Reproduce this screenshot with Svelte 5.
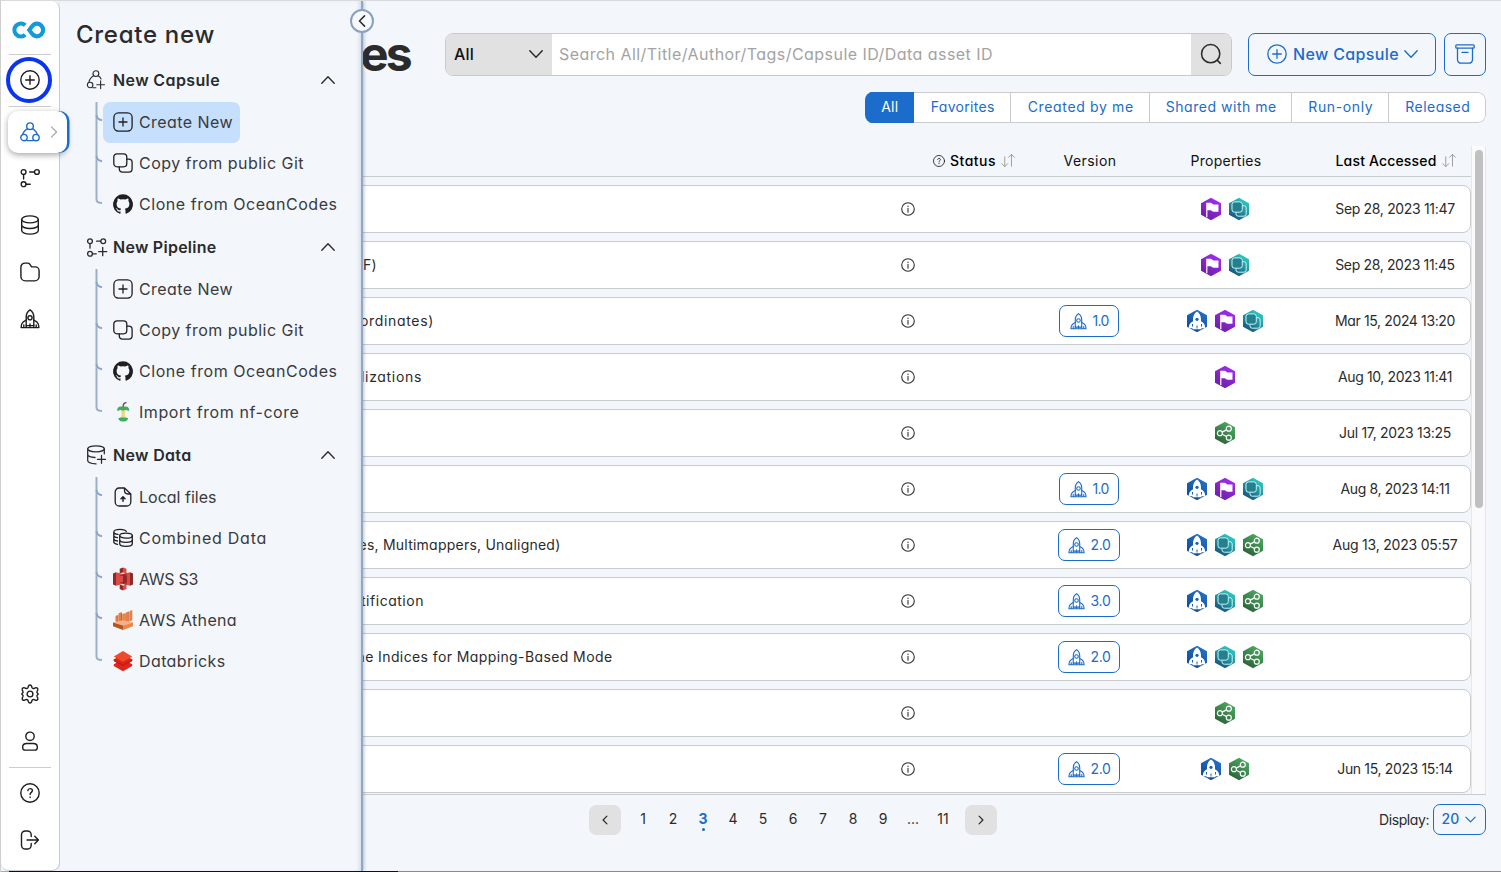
<script>
  // Spreads letter spacing so a label fills its designed width.
  function fit(node, width) {
    const natural = node.getBoundingClientRect().width;
    const count = node.textContent.length;
    node.style.letterSpacing = `${(width + 1 - natural) / count}px`;
  }

  const rocket =
    '<path d="M6.200 16.600V8.200C6.200 4.600 8.200 1.900 10 .8c1.800 1.100 3.800 3.800 3.800 7.400v8.400z"/><circle cx="10" cy="8.800" r="2.100"/><path d="M6.200 11 3 13.200C1.700 14.200 1.100 15.500 1.100 18.600h5.100M13.800 11 17 13.200c1.300 1 1.900 2.300 1.900 5.400h-5.100M10 15v3.600M6.200 16.600v2h7.600v-2M3.800 16v2.600M16.200 16v2.600"/>';
  const capsule =
    '<circle cx="10" cy="4.200" r="3.300"/><circle cx="4" cy="15.600" r="3.200"/><circle cx="16" cy="15.600" r="3.200"/><path d="M7.600 6.600C4.800 8.400 3 10 2.800 12.600M12.400 6.600c2.800 1.800 4.600 3.400 4.800 6M6.900 18.600h6.200"/>';
  const github =
    '<path fill="currentColor" stroke="none" d="M10 .3a10 10 0 0 0-3.160 19.490c.5.090.680-.220.680-.480v-1.700c-2.780.600-3.370-1.340-3.370-1.340-.450-1.160-1.110-1.470-1.110-1.470-.910-.620.070-.600.070-.600 1 .070 1.530 1.030 1.530 1.030.890 1.530 2.340 1.090 2.910.830.090-.650.350-1.090.630-1.340-2.220-.250-4.560-1.110-4.560-4.940 0-1.090.390-1.980 1.030-2.680-.100-.250-.450-1.270.100-2.650 0 0 .840-.270 2.750 1.020a9.600 9.600 0 0 1 5 0c1.910-1.290 2.750-1.020 2.750-1.020.550 1.380.200 2.400.100 2.650.640.700 1.030 1.590 1.030 2.680 0 3.840-2.340 4.690-4.570 4.930.360.310.680.920.680 1.850v2.750c0 .270.180.580.690.480A10 10 0 0 0 10 .300z"/>';
  const icons = {
    plusCircle: '<circle cx="10" cy="10" r="9.200"/><path d="M10 5.700v8.600M5.700 10h8.600"/>',
    capsule,
    capsuleAdd:
      '<g transform="scale(.86)"><circle cx="11.500" cy="4.200" r="3.400"/><circle cx="4.800" cy="17.400" r="3.200"/><path d="M8.900 6.600C6 8.400 3.800 10.800 3.400 14.300M14.200 6.600c1.600 1 2.700 2.300 3.300 3.800M7.900 20.600h3.600M17 12.600v9M12.500 17.100h9"/></g>',
    pipeline:
      '<circle cx="3.600" cy="4" r="2.400"/><circle cx="16.900" cy="4" r="2.400"/><circle cx="3.600" cy="16.200" r="2.400"/><path d="M3.600 6.500V11M9.700 4h4.500M6.200 16.200h4"/>',
    pipelineAdd:
      '<circle cx="4" cy="4.200" r="2.400"/><circle cx="17.200" cy="4.200" r="2.400"/><circle cx="4" cy="16.800" r="2.400"/><path d="M4 6.700v4.500M10.600 4.200h4M6.500 16.800h3.800M16.700 10.500v8.200M12.600 14.600h8.200"/>',
    database:
      '<ellipse cx="10" cy="4.400" rx="8.300" ry="3.500"/><path d="M1.700 4.400v11.200c0 2 3.700 3.500 8.300 3.500s8.300-1.500 8.300-3.500V4.400M1.700 10c0 2 3.700 3.500 8.300 3.500s8.300-1.500 8.300-3.500"/>',
    databaseAdd:
      '<ellipse cx="10" cy="3.800" rx="8.300" ry="3"/><path d="M1.700 3.800v11.800c0 1.700 3 3.100 8.300 3.300M18.300 3.800v5M1.700 9.600c0 1.600 2.800 2.600 7.300 2.900M15.500 10.500v7.800M11.500 14.400h8"/>',
    databases:
      '<ellipse cx="13" cy="7.700" rx="6.300" ry="2.500"/><path d="M6.700 7.700v8c0 1.500 2.800 2.600 6.300 2.600s6.300-1.100 6.300-2.600v-8M6.700 11.700c0 1.500 2.800 2.600 6.300 2.600s6.300-1.100 6.300-2.600M13.300 3.500C12.800 2.300 10.200 1.400 7 1.400c-3.500 0-6.200 1.100-6.200 2.500S3 6.100 5 6.400M.8 3.900v10.200c0 1.100 1.500 1.900 3.700 2.300M.8 7.500c0 1 1.400 1.800 3.600 2.200M.8 10.800c0 1 1.400 1.900 3.600 2.200"/>',
    folder:
      '<path d="M.9 5.300v9.200A4.400 4.400 0 0 0 5.300 18.900h9.400a4.400 4.400 0 0 0 4.400-4.400V8.900a4 4 0 0 0-4-4h-3.500L9.700 2.200A2.500 2.500 0 0 0 7.700 1.100H5A4.100 4.100 0 0 0 .9 5.300z"/>',
    rocket,
    gear:
      '<circle cx="10" cy="10" r="2.900"/><path d="M8.400 2.200c.5-1.600 2.700-1.600 3.200 0l.3 1.100c.3 1 1.400 1.500 2.400 1l1-.5c1.500-.7 3 .8 2.400 2.300l-.6 1.200c-.3.700-.2 1.700.6 2.100l.6.600-.6.600c-.8.400-.9 1.400-.6 2.100l.6 1.200c.6 1.500-.9 3-2.400 2.300l-1-.5c-1-.5-2.100 0-2.400 1l-.3 1.100c-.5 1.600-2.700 1.600-3.200 0l-.3-1.100c-.3-1-1.400-1.500-2.400-1l-1 .5c-1.500.7-3-.8-2.400-2.300l.6-1.200c.3-.7.200-1.700-.6-2.100l-.6-.6.600-.6c.8-.4.9-1.400.6-2.100l-.6-1.200c-.6-1.500.9-3 2.400-2.300l1 .5c1 .5 2.100 0 2.400-1z"/>',
    user:
      '<circle cx="10" cy="5.300" r="4.200"/><path d="M2.700 16c0-2.300 1.700-3.500 4-3.500h6.600c2.300 0 4 1.200 4 3.500v.7c0 1.600-1.100 2.400-2.500 2.400H5.200c-1.400 0-2.500-.8-2.500-2.400z"/>',
    help:
      '<circle cx="10" cy="10" r="9.200"/><path d="M7.800 7.600c.2-1.300 1-2 2.300-2 1.400 0 2.300.8 2.300 2 0 1.700-2.300 1.800-2.300 3.700v.3M10.100 14v.5"/>',
    logout:
      '<path d="M11.200 6.500V4.800A3.800 3.800 0 0 0 7.400 1H5.300A3.800 3.800 0 0 0 1.500 4.800v10.400A3.800 3.800 0 0 0 5.300 19h2.100a3.800 3.800 0 0 0 3.800-3.800v-1.700M7 10h11.400M14.800 6.200 18.400 10l-3.600 3.800"/>',
    plusSquare:
      '<rect x=".9" y=".9" width="18.200" height="18.200" rx="4.500"/><path d="M10 6v8M6 10h8"/>',
    copy:
      '<rect x=".8" y=".8" width="13" height="13" rx="3.200"/><path d="M13.800 6.200h2a3.300 3.300 0 0 1 3.300 3.300v6.300a3.300 3.300 0 0 1-3.300 3.300H9.600a3.300 3.300 0 0 1-3.300-3.300v-2"/>',
    github,
    apple:
      '<path stroke="none" fill="#efd687" d="M7.600 7.600h5.200c-1.300 2.500-1.300 6 0 9H7.600c1.300-3 1.300-6.500 0-9z"/><path stroke="none" fill="#3fae5a" d="M4.200 8.800C3.800 5.400 6.300 3.600 10.200 5c3.900-1.400 6.400.4 6 3.800-2 0-2.400-1-3.200-.7-1.800.6-3.900.6-5.600 0-.8-.3-1.200.7-3.200.7zM5.200 16c1.700.3 1.700-.8 3-.5h4c1.300-.3 1.300.8 3 .5-.6 2.800-2.800 4-5 3.200-2.200.8-4.400-.4-5-3.200z"/><path stroke="#6b4a55" d="M10.200 4.800C10 2.800 11 1 13 .6"/>',
    file:
      '<path d="M11.500 1H6.200a4 4 0 0 0-4 4v10a4 4 0 0 0 4 4h7.600a4 4 0 0 0 4-4V7zM11.500 1v2.600A3.400 3.400 0 0 0 14.900 7h2.900"/><path stroke-width="1.500" d="M10 14.200v-3.800M8 11.700l2-2 2 2"/>',
    s3:
      '<g stroke="none"><path fill="#8c2a25" d="M0 4.500 3 3.200v13.600L0 15.500zM20 4.500l-3-1.300v13.600l3-1.300z"/><path fill="#db4a44" d="M3 3.200 10 5v10l-7 1.800zM17 3.200 10 5v10l7 1.800z"/><path fill="#a8322d" d="M10 5l3.700-.9v11.800L10 15z"/><path fill="#8c2a25" d="M6.700-.2 10-1.500v5L6.700 4.200zM6.700 15.800 10 16.500v5l-3.300-1.400zM10 7h3.800v6H10z"/><path fill="#db4a44" d="m10-1.500 3.500 1.300v4.400L10 3.500zM10 16.500l3.500-.7v4.300L10 21.500zM6.500 7H10v6H6.500z"/><path fill="#8c2a25" d="M6.300 6.400 10 5.600l3.700.8L10 7zM6.300 13.600l3.700.8 3.700-.8L10 13z"/></g>',
    athena:
      '<g stroke="none"><path fill="#e8813f" d="M2.400 6.200 4.300 5v7.200l-1.900-.9zM5.500 3.300l2.500-1v10.800l-2.500-.8zM9.200 4l2.500-.8v9.800l-2.500.5zM12.900 2.500l2.500-.9V12l-2.500 1zM16.600 1l2.700-1v10.200l-2.700 1.200z"/><path fill="#b85420" d="M4.300 5l1 .5v6.700h-1zM8 2.300l.9.400v10.600L8 13zM11.700 3.200l.9.400v9.500l-.9-.1zM15.400 1.600l.9.300v9.800l-.9.300z"/><path fill="#f5b08a" d="m0 12.500 10-2.300 10 2.300-10 3z"/><path fill="#b85420" d="m0 12.500 10 3V20L0 16.200z"/><path fill="#ee8644" d="m20 12.500-10 3V20l10-3.800z"/></g>',
    bricks:
      '<g stroke="none"><path fill="#b51a16" d="M3.500 6h13v8.500L10 17l-6.500-2.500z"/><path fill="#e1251b" d="M.8 13.300 4.500 11.300 10 14.500l5.500-3.200 3.700 2v1.600L10 20.200.8 14.900z"/><path fill="#e1251b" d="M.8 8.200 4.500 6.500h11l3.700 1.700v1.900L10 15.300.8 10.100z"/><path fill="#c81c18" d="m.8 8.200 9.200 5.100 9.200-5.100v1.900L10 15.300.8 10.100z"/><path fill="#ef4a2b" d="m10 .1 9.200 5.300L10 10.700.8 5.400z"/></g>',
    up: '<path d="m3.800 13.200 6.200-6.400 6.200 6.400"/>',
    down: '<path d="m3.800 6.800 6.200 6.400 6.200-6.400"/>',
    left: '<path d="M13.200 3.600 6.800 10l6.400 6.400"/>',
    right: '<path d="M6.800 3.600 13.200 10l-6.400 6.400"/>',
    search: '<circle cx="9.700" cy="9.700" r="8.300"/><path d="m15.800 15.800 2.700 2.700"/>',
    archive:
      '<rect x=".8" y=".8" width="18.400" height="3.400" rx="1"/><path d="M2.500 4.200v11.500a3.500 3.500 0 0 0 3.500 3.500h8a3.500 3.500 0 0 0 3.500-3.500V4.200M7 8.400h6"/>',
    info: '<circle cx="10" cy="10" r="9"/><path d="M10 9v5.500M10 5.700v.8"/>',
    sort: '<path d="M5 5v13M1 14.200l4 4 4-4M14 17.500V2M10 5.800l4-4 4 4"/>'
  };

  const badges = {
    rocket: ['#2172d0', '#134a90', '<path fill="#fff" stroke="none" d="M10 .6c2.200 1.400 3.900 4 4 7.300v2.400c3 1.500 4.200 3.300 4.200 7h-3.400l-.8 1H6l-.8-1H1.800c0-3.700 1.200-5.500 4.200-7V7.900C6.100 4.600 7.800 2 10 .6z"/><circle cx="10" cy="8.300" r="1.600" fill="#1c61b6" stroke="none"/><path stroke="#1c61b6" stroke-width="1" d="M10 14.500v3M5.500 13v2.500M14.500 13v2.500"/>'],
    flag: ['#a32cf5', '#6a1fa0', '<path fill="#fff" stroke="none" d="M5.200 3.700h4.600c1 0 1.500 1.700 3 1.700h4.700v7.400h-5c-1.300 0-1.700-1.600-3-1.600H6.400v7H5.200z"/>'],
    copy: ['#2fd4c6', '#164c7c', '<g stroke="#c9f5f1" stroke-width="1"><path d="M13.300 6.600h1.600a2.300 2.300 0 0 1 2.300 2.300v6a2.300 2.300 0 0 1-2.300 2.300H9.300A2.300 2.300 0 0 1 7 14.900v-1.600"/><rect x="3" y="2.900" width="10.300" height="10.300" rx="2.500" fill="#24808f"/></g>'],
    share: ['#4fae62', '#2a5f39', '<g stroke="#fff" stroke-width="1.200"><circle cx="4.900" cy="10.200" r="2.500"/><circle cx="13.800" cy="5.700" r="2.500"/><circle cx="13.800" cy="14.700" r="2.500"/><path d="m7.200 9.100 4.300-2.200M7.200 11.300l4.300 2.200"/></g>']
  };

  const railTop = ['pipeline', 'database', 'folder', 'rocket'];
  const sections = [
    { icon: 'capsuleAdd', title: 'New Capsule', w: 106, items: [
      ['plusSquare', 'Create New', 93, true],
      ['copy', 'Copy from public Git', 164],
      ['github', 'Clone from OceanCodes', 197.5]
    ] },
    { icon: 'pipelineAdd', title: 'New Pipeline', w: 102.5, items: [
      ['plusSquare', 'Create New', 93],
      ['copy', 'Copy from public Git', 164],
      ['github', 'Clone from OceanCodes', 197.5],
      ['apple', 'Import from nf-core', 159.5]
    ] },
    { icon: 'databaseAdd', title: 'New Data', w: 77.5, items: [
      ['file', 'Local files', 76.5],
      ['databases', 'Combined Data', 127],
      ['s3', 'AWS S3', 58],
      ['athena', 'AWS Athena', 97],
      ['bricks', 'Databricks', 85.5]
    ] }
  ];
  const tabs = [['All', 16], ['Favorites', 63], ['Created by me', 105], ['Shared with me', 110], ['Run-only', 64], ['Released', 64]];
  const rows = [
    { props: ['flag', 'copy'], date: 'Sep 28, 2023 11:47', dw: 118.5 },
    { name: 'F)', w: 13, end: 376, props: ['flag', 'copy'], date: 'Sep 28, 2023 11:45', dw: 118.5 },
    { name: 'ordinates)', w: 73, end: 433, version: '1.0', props: ['rocket', 'flag', 'copy'], date: 'Mar 15, 2024 13:20', dw: 119 },
    { name: 'lizations', w: 60, end: 421, props: ['flag'], date: 'Aug 10, 2023 11:41', dw: 113 },
    { props: ['share'], date: 'Jul 17, 2023 13:25', dw: 111 },
    { version: '1.0', props: ['rocket', 'flag', 'copy'], date: 'Aug 8, 2023 14:11', dw: 108 },
    { name: 'es, Multimappers, Unaligned)', w: 201, end: 559.5, version: '2.0', props: ['rocket', 'copy', 'share'], date: 'Aug 13, 2023 05:57', dw: 124 },
    { name: 'tification', w: 62, end: 423, version: '3.0', props: ['rocket', 'copy', 'share'] },
    { name: 'ne Indices for Mapping-Based Mode', w: 255, end: 611.5, version: '2.0', props: ['rocket', 'copy', 'share'] },
    { props: ['share'] },
    { version: '2.0', props: ['rocket', 'share'], date: 'Jun 15, 2023 15:14', dw: 114.5 }
  ];
  const pages = ['1', '2', '3', '4', '5', '6', '7', '8', '9', '...', '11'];
</script>

{#snippet icon(name, size = 20, sw = 1.4)}
  <svg class="icon" width={size} height={size} viewBox="0 0 20 20" fill="none" stroke="currentColor" stroke-width={sw} stroke-linecap="round" stroke-linejoin="round">{@html icons[name]}</svg>
{/snippet}

<svg class="defs" width="0" height="0">
  <defs>
    {#each Object.entries(badges) as [key, b]}
      <linearGradient id={'g-' + key} x1=".8" y1="0" x2=".2" y2="1">
        <stop offset="0" stop-color={b[0]} /><stop offset="1" stop-color={b[1]} />
      </linearGradient>
    {/each}
  </defs>
</svg>

<div class="app">
  <nav class="rail">
    <div class="logo">
      <svg width="34" height="20" viewBox="0 0 34 20" fill="none" stroke="#119bd7" stroke-width="4.200">
        <path d="M13.200 5.300A6.400 6.400 0 1 0 13.200 14.700" />
        <path d="M17.300 10C19.600 7.200 20.700 3.600 24.700 3.600a6.400 6.400 0 0 1 0 12.800C20.700 16.400 19.600 12.800 17.300 10z" />
      </svg>
    </div>
    <div class="add">{@render icon('plusCircle')}</div>
    <div class="active"><div class="card">{@render icon('capsule')}<div class="chev">{@render icon('right', 16, 1.6)}</div></div></div>
    <div class="links">
      {#each railTop as name}<div class="link">{@render icon(name)}</div>{/each}
    </div>
    <div class="links low">
      <div class="link">{@render icon('gear')}</div>
      <div class="link">{@render icon('user')}</div>
    </div>
    <div class="links last">
      <div class="link">{@render icon('help')}</div>
      <div class="link">{@render icon('logout')}</div>
    </div>
  </nav>

  <main>
    <header>
      <h1><span use:fit={49}>es</span></h1>
      <div class="search">
        <div class="scope"><b use:fit={19}>All</b>{@render icon('down', 20, 1.5)}</div>
        <div class="query"><span use:fit={433}>Search All/Title/Author/Tags/Capsule ID/Data asset ID</span></div>
        <div class="go">{@render icon('search', 22, 1.4)}</div>
      </div>
      <button class="new">{@render icon('plusCircle', 20, 1.3)}<span use:fit={105}>New Capsule</span><i>{@render icon('down', 20, 1.4)}</i></button>
      <button class="archive">{@render icon('archive', 20, 1.3)}</button>
    </header>

    <div class="tabs">
      {#each tabs as [label, w], i}<div class="tab" class:on={i === 0}><span use:fit={w}>{label}</span></div>{/each}
    </div>

    <div class="tablewrap">
      <section class="table">
        <div class="grid head">
          <div></div><div></div>
          <div class="status">{@render icon('help', 12, 1.3)}<b use:fit={45}>Status</b><i>{@render icon('sort', 15, 1.3)}</i></div>
          <div><span use:fit={52}>Version</span></div>
          <div><span use:fit={70}>Properties</span></div>
          <div class="lasth"><b use:fit={100}>Last Accessed</b><i>{@render icon('sort', 15, 1.3)}</i></div>
        </div>
        {#each rows as row}
          <div class="grid row">
            <div class="name">{#if row.name}<p style:width="{row.end - 76}px"><span use:fit={row.w}>{row.name}</span></p>{/if}</div>
            <div class="about">{@render icon('info', 14, 1.5)}</div>
            <div></div>
            <div>{#if row.version}<div class="ver" class:wide={row.version !== '1.0'}>{@render icon('rocket', 17, 1.3)}<span use:fit={row.version === '1.0' ? 15 : 19}>{row.version}</span></div>{/if}</div>
            <div class="props">
              {#each row.props as p}
                <svg width="22" height="24" viewBox="-1 -2 22 24" fill="none" stroke-linejoin="round">
                  <path d="M10-1.300 20 4.300v11.400L10 21.300 0 15.700V4.300z" fill="url(#g-{p})" />
                  {@html badges[p][2]}
                </svg>
              {/each}
            </div>
            <div>{#if row.date}<span use:fit={row.dw}>{row.date}</span>{/if}</div>
          </div>
        {/each}
      </section>
      <div class="scroll"><div class="thumb"></div></div>
    </div>

    <footer>
      <div class="pager">
        <div class="arrow">{@render icon('left', 12, 2.1)}</div>
        {#each pages as p}<div class="page" class:cur={p === '3'}>{p}</div>{/each}
        <div class="arrow">{@render icon('right', 12, 2.1)}</div>
      </div>
      <div class="display"><span use:fit={49}>Display:</span><div class="count"><span use:fit={17}>20</span>{@render icon('down', 15, 1.6)}</div></div>
    </footer>
  </main>

  <aside class="drawer">
    <h2><span use:fit={138}>Create new</span></h2>
    {#each sections as s}
      <div class="sec">{@render icon(s.icon, 20, 1.3)}<b use:fit={s.w}>{s.title}</b><div class="fold">{@render icon('up', 20, 1.4)}</div></div>
      <div class="list">
        {#each s.items as [ic, label, w, on], i}
          <div class="item">
            <svg class="branch" width="9" height="41" viewBox="0 0 9 41" fill="none" stroke="#8ea4c4" stroke-width="2">
              {#if i < s.items.length - 1}<path d="M2.500 0v41" stroke="#9db0cb" /><path d="M2.500 13q.5 4.500 5.500 5.200" />{:else}<path d="M2.500 0v15.500q0 3.500 5.500 3.500" stroke="#9db0cb" />{/if}
            </svg>
            <div class="entry" class:on>{@render icon(ic, 20, 1.3)}<span use:fit={w}>{label}</span></div>
          </div>
        {/each}
      </div>
    {/each}
    <div class="close">{@render icon('left', 16, 1.9)}</div>
  </aside>
  <div class="edge"></div>
</div>

<style>
  :global(body) { margin: 0; background: #f3f7fc; }
  .app {
    position: relative; display: flex; width: 1501px; height: 872px; box-sizing: border-box; overflow: hidden;
    background: #f3f7fc; border-top: 1px solid #d9dadb; border-left: 1px solid #cfcfd0;
    font-family: Inter, "Open Sans", sans-serif; font-feature-settings: "cv11"; font-size: 14px; color: #2b2b2b;
  }
  .app * { box-sizing: border-box; }
  .defs { position: absolute; }
  .icon { display: block; flex: none; overflow: visible; }
  span, b { white-space: nowrap; }
  i { display: block; }

  .rail { display: flex; flex-direction: column; width: 59px; height: 870px; background: #fff; border-right: 1px solid #c9cbce; border-bottom: 1px solid #c9cbce; border-radius: 0 8px 8px 8px; flex: none; z-index: 4; color: #1d1d1f; }
  .logo { height: 54px; padding: 19px 0 0 3px; margin: 0 8px; border-bottom: 1px solid #ccc; }
  .logo svg { display: block; }
  .add { width: 46px; height: 46px; margin: 2px 0 2px 5px; border: 4px solid #0a35f0; border-radius: 50%; display: grid; place-items: center; padding-left: 2px; }
  .active { margin-left: 7px; height: 48px; width: 61px; }
  .active::before { content: ""; display: block; width: 42px; height: 1px; margin: 1px 0 4px 1px; background: #ccc; }
  .card { display: flex; align-items: center; width: 59px; height: 42px; padding-left: 12px; background: #fff; border-radius: 10px; color: #1b6ccb; box-shadow: 2.500px 0 0 #1b6ccb, 0 2px 6px rgba(0, 0, 0, .35); }
  .chev { color: #a9a9a9; margin-left: 6px; }
  .links { display: flex; flex-direction: column; gap: 27.200px; padding: 14.500px 0 0 19px; }
  .low { margin: auto 8px 0; padding: 0 0 16px 11px; border-bottom: 1px solid #ccc; }
  .last { padding: 15px 0 20px 19px; }

  .drawer { position: absolute; z-index: 3; left: 59px; top: 0; width: 303px; height: 870px; background: #f3f7fc; border-right: 2px solid #93a7c2; box-shadow: 1px 0 3px rgba(60, 80, 120, .35), inset -3px 0 4px -2px rgba(80, 110, 150, .25); padding-left: 15px; }
  h2 { margin: 0; height: 57px; padding: 18px 0 0 1px; font-size: 24px; line-height: 31px; font-weight: 500; }
  .sec { display: flex; align-items: center; height: 44px; padding-left: 11px; gap: 7px; font-size: 16px; }
  .sec b { font-weight: 600; }
  .fold { margin-left: auto; margin-right: 23px; }
  .list { padding-left: 19px; font-size: 16px; }
  .item { display: flex; height: 41px; }
  .branch { flex: none; }
  .entry { display: flex; align-items: center; gap: 6px; height: 41px; padding: 0 7px 2px 10px; border-radius: 7px; color: #3a3a3c; }
  .entry.on { background: #c5dffd; }
  .entry .icon { color: #1f1f21; }
  .close { position: absolute; right: -13px; top: 8px; width: 24px; height: 24px; border: 2px solid #8b9fbf; border-radius: 50%; background: #f5f8fc; display: grid; place-items: center; }

  main { flex: 1; min-width: 0; padding-left: 16px; padding-right: 15px; display: flex; flex-direction: column; }
  header { display: flex; height: 75px; padding-top: 32px; }
  h1 { width: 334px; margin: -12px 35px 0 0; text-align: right; font-size: 48px; line-height: 66px; font-weight: 700; }
  .search { display: flex; width: 787px; height: 43px; border: 1px solid #c9c9ca; border-radius: 8px; overflow: hidden; background: #fff; font-size: 16px; }
  .scope { width: 106px; padding: 0 5px 0 8px; background: #e1e1e1; display: flex; align-items: center; justify-content: space-between; }
  .scope b { font-weight: 500; color: #111; padding-bottom: 2px; }
  .scope .icon { margin: 0 1px 2px 0; }
  .query { flex: 1; display: flex; align-items: center; padding: 0 0 2px 7px; color: #a3a3a3; }
  .go { width: 40px; background: #e1e1e1; display: grid; place-items: center; padding-bottom: 2px; }
  button { font: inherit; font-feature-settings: inherit; color: #1b6ccb; background: transparent; border: 1px solid #1b6ccb; border-radius: 7px; height: 43px; padding: 0 0 2px; display: flex; align-items: center; justify-content: center; }
  .new { width: 188px; margin-left: 16px; padding-left: 18px; justify-content: flex-start; font-size: 16px; font-weight: 500; gap: 6px; }
  .new i { margin-left: -4px; }
  .archive { width: 42px; margin-left: 8px; }
  .tabs { display: grid; grid-template-columns: 49px 97px 139px 142px 97px 97px; width: 621px; height: 31px; margin: 16px 0 0 auto; border-radius: 8px; background: #fff; overflow: hidden; color: #1b6ccb; }
  .tab { display: grid; place-items: center; border: solid #c9cbce; border-width: 1px 1px 1px 0; padding: 0 0 2px 1.500px; }
  .tab:last-child { border-radius: 0 8px 8px 0; }
  .tab.on { background: #1b6ccb; color: #fff; border-color: #1b6ccb; }
  .tablewrap { display: flex; height: 649px; margin-top: 23px; border-bottom: 1px solid #c9cbce; overflow: hidden; }
  .table { width: 1395px; }
  .grid { display: grid; grid-template-columns: 1fr 37px 121px 82px 190px 150px; align-items: center; justify-items: center; }
  .head { height: 31px; border-bottom: 1px solid #c9cbce; margin-bottom: 8px; padding-bottom: 1px; color: #111; }
  .head b { font-weight: 500; color: #000; }
  .head i { color: #9c9c9c; }
  .status, .lasth { display: flex; align-items: center; gap: 5px; }
  .status { margin-right: 28px; }
  .row { height: 48px; margin-bottom: 8px; border: 1px solid #c9cbce; border-radius: 8px; background: #fff; }
  .row span { display: block; padding-bottom: 2px; }
  .about { margin-right: 1px; }
  .name { justify-self: start; }
  .name p { margin: 0; display: flex; justify-content: flex-end; }
  .ver { width: 60px; height: 32px; display: flex; align-items: center; justify-content: center; gap: 6px; border: 1px solid #1b6ccb; border-radius: 7px; color: #1b6ccb; }
  .ver.wide { width: 62px; }
  .props { display: flex; gap: 6px; }
  .scroll { width: 15px; background: #fafafa; border-left: 1px solid #e7e7e8; border-right: 1px solid #e7e7e8; padding: 4px 0 0 3px; }
  .thumb { width: 8px; height: 358px; border-radius: 4px; background: #c0c0c0; }
  footer { display: flex; justify-content: space-between; margin-top: 9px; }
  .pager { display: flex; align-items: center; margin-left: 513px; }
  .arrow { width: 32px; height: 30px; border-radius: 7px; background: #e1e1e1; display: grid; place-items: center; }
  .page { width: 30px; text-align: center; padding-bottom: 2px; }
  .arrow + .page { margin-left: 7px; }
  .page:nth-last-child(2) { margin-right: 7px; }
  .cur { position: relative; color: #1b6ccb; font-weight: 700; }
  .cur::after { content: ""; position: absolute; left: 14px; bottom: -2px; width: 3px; height: 3px; border-radius: 50%; background: #1b6ccb; }
  .display { display: flex; align-items: center; gap: 4px; }
  .display span { padding-bottom: 1px; }
  .count { display: flex; align-items: center; justify-content: center; gap: 3px; width: 53px; height: 31px; border: 1px solid #1b6ccb; border-radius: 7px; color: #1b6ccb; font-weight: 500; padding-bottom: 1px; }
  .edge { position: absolute; z-index: 5; left: 0; right: 0; bottom: 0; height: 1px; background: linear-gradient(90deg, #b9a2ac 8px, #150d18 8px 397px, #8a8a8c 397px); }
</style>
